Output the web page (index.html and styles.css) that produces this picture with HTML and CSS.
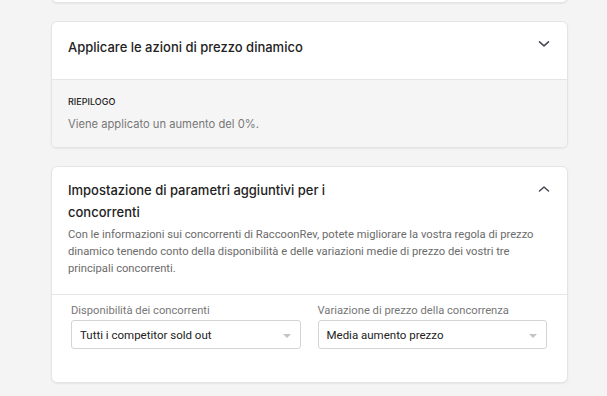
FILE: index.html
```html
<!DOCTYPE html>
<html lang="it">
<head>
<meta charset="utf-8">
<link rel="stylesheet" href="styles.css">
</head>
<body>
<div class="page">
  <div class="card card-prev"></div>

  <section class="card">
    <header class="card-head">
      <h2 class="card-title">Applicare le azioni di prezzo dinamico</h2>
      <svg class="chev" width="12" height="8" viewBox="0 0 12 8"><path d="M1.5 1.8 L6 5.8 L10.5 1.8" fill="none" stroke="#4a4f57" stroke-width="1.6" stroke-linecap="round" stroke-linejoin="round"/></svg>
    </header>
    <div class="summary">
      <div class="summary-label">RIEPILOGO</div>
      <div class="summary-text">Viene applicato un aumento del 0%.</div>
    </div>
  </section>

  <section class="card">
    <header class="card-head open">
      <div class="head-text">
        <h2 class="card-title narrow">Impostazione di parametri aggiuntivi per i concorrenti</h2>
        <p class="desc">Con le informazioni sui concorrenti di RaccoonRev, potete migliorare la vostra regola di prezzo dinamico tenendo conto della disponibilità e delle variazioni medie di prezzo dei vostri tre principali concorrenti.</p>
      </div>
      <svg class="chev" width="12" height="8" viewBox="0 0 12 8"><path d="M1.5 6 L6 2 L10.5 6" fill="none" stroke="#4a4f57" stroke-width="1.6" stroke-linecap="round" stroke-linejoin="round"/></svg>
    </header>
    <div class="fields">
      <div class="field">
        <label class="field-label">Disponibilità dei concorrenti</label>
        <div class="select"><span>Tutti i competitor sold out</span><span class="caret"></span></div>
      </div>
      <div class="field">
        <label class="field-label">Variazione di prezzo della concorrenza</label>
        <div class="select"><span>Media aumento prezzo</span><span class="caret"></span></div>
      </div>
    </div>
  </section>
</div>
</body>
</html>
```

FILE: styles.css
```css
html, body {
  margin: 0;
  padding: 0;
  background: #f4f4f4;
  height: 100%;
  overflow: hidden;
}
body {
  font-family: "Inter", "Liberation Sans", sans-serif;
  color: #222;
}
.page {
  width: 517px;
  margin-left: 51px;
  display: flex;
  flex-direction: column;
  gap: 18px;
  margin-top: -40px;
}
.card {
  background: #fff;
  border: 1px solid #e4e4e4;
  border-radius: 6px;
  box-shadow: 0 1px 2px rgba(0,0,0,0.06);
  overflow: hidden;
}
.card-prev {
  height: 41px;
}
.card-head {
  display: flex;
  justify-content: space-between;
  align-items: flex-start;
  padding: 15px 17px 0 16px;
  height: 42px;
}
.card-head.open {
  height: auto;
  padding: 12px 17px 17px 16px;
  border-bottom: 1px solid #e6e6e6;
}
.card-title {
  margin: 0;
  font-size: 13px;
  font-weight: 500;
  line-height: 20px;
  color: #222;
}
.narrow {
  max-width: 262px;
  line-height: 22px;
}
.chev {
  margin-top: 3px;
  flex: none;
}
.open .chev {
  margin-top: 6px;
}
.head-text {
  flex: 1;
}
.desc {
  margin: 3px 0 0;
  font-family: "Roboto", "Liberation Sans", sans-serif;
  font-size: 11.2px;
  line-height: 17px;
  color: #6b6b6b;
  max-width: 475px;
}
.summary {
  background: #f5f5f5;
  border-top: 1px solid #e6e6e6;
  padding: 15px 16px 15px;
}
.summary-label {
  font-size: 9px;
  font-weight: 500;
  line-height: 14px;
  color: #222;
}
.summary-text {
  margin-top: 7px;
  font-size: 11.2px;
  line-height: 16px;
  color: #777;
}
.fields {
  display: grid;
  grid-template-columns: 1fr 1fr;
  gap: 17px;
  padding: 9px 20px 33px 19px;
}
.field {
  display: flex;
  flex-direction: column;
  gap: 2px;
}
.field-label {
  font-family: "Roboto", "Liberation Sans", sans-serif;
  font-size: 11.2px;
  line-height: 14px;
  color: #777;
}
.select {
  display: flex;
  align-items: center;
  justify-content: space-between;
  height: 27px;
  border: 1px solid #d4d4d4;
  border-radius: 3px;
  padding: 0 9px 0 8px;
  font-family: "Roboto", "Liberation Sans", sans-serif;
  font-size: 11.5px;
  color: #222;
}
.caret {
  width: 0;
  height: 0;
  border-left: 4px solid transparent;
  border-right: 4px solid transparent;
  border-top: 4px solid #c4c4c4;
  margin-top: 2px;
}
```
